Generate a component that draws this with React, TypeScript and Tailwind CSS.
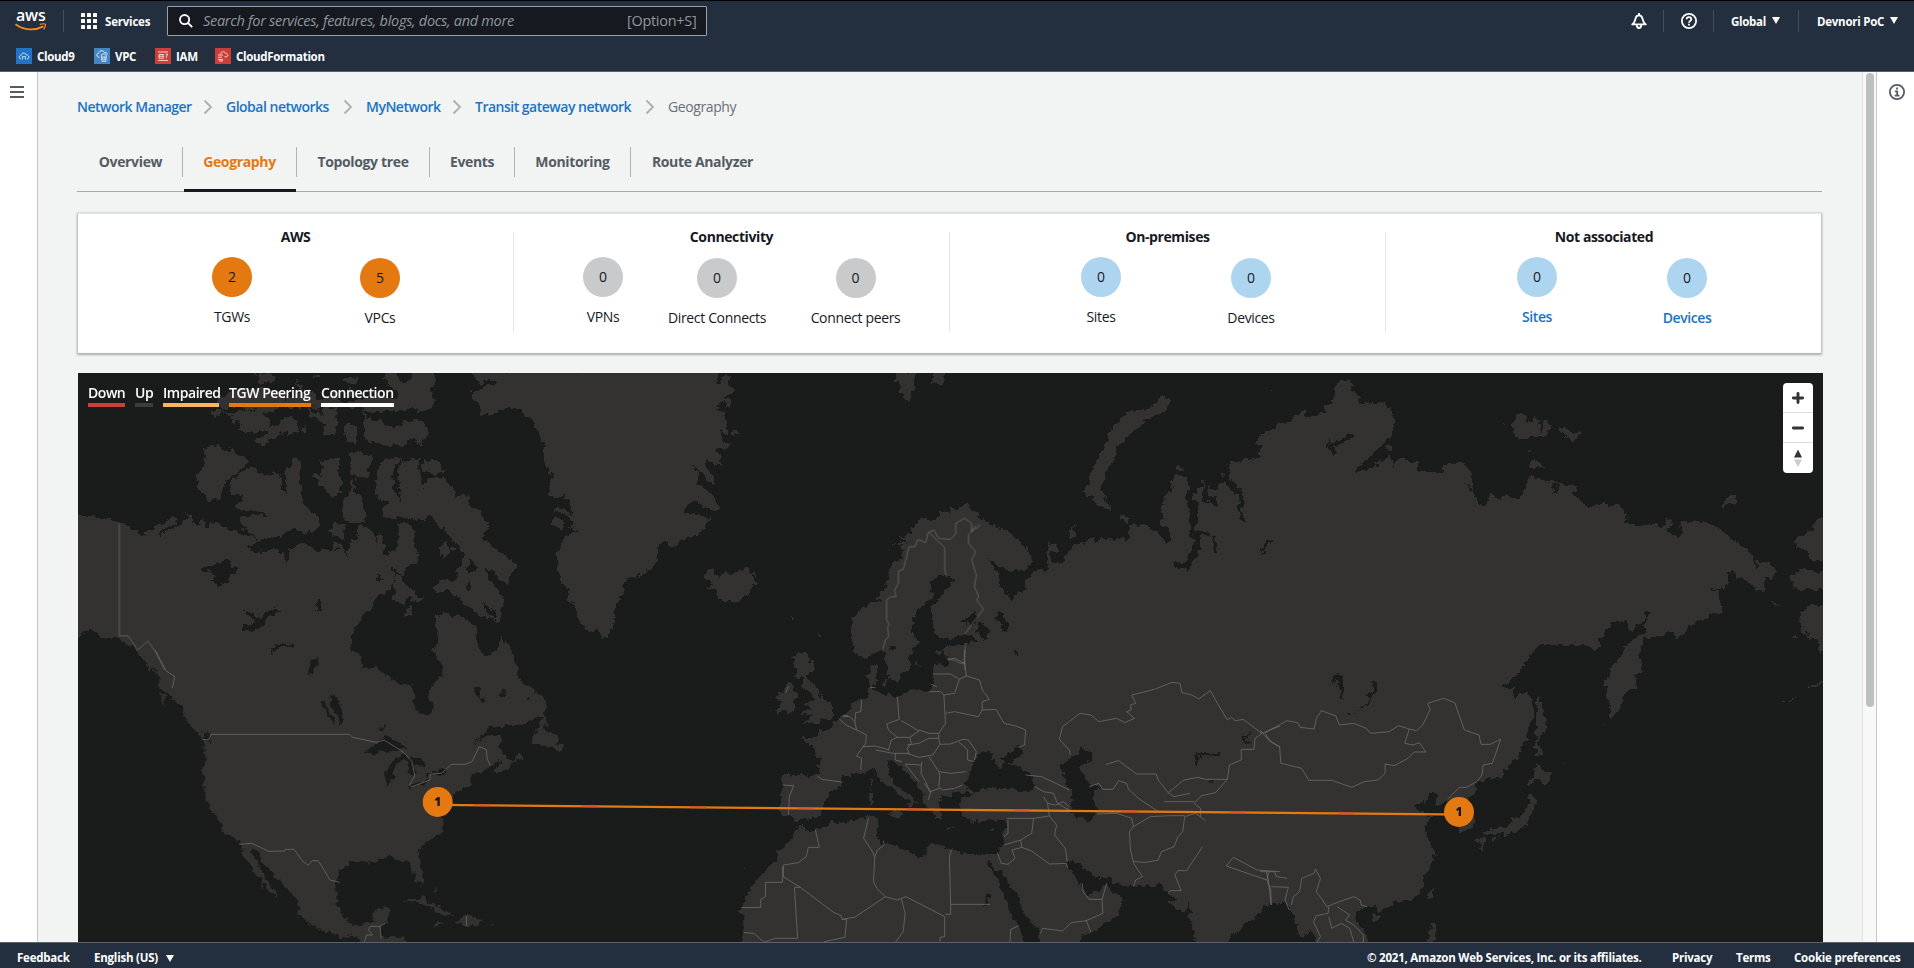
import React from "react";

type Tile = { x: number; y: number; w: number; h: number; land: string[]; water: string[]; borders: string };

const tiles: Tile[] = [
  {
    x: 60, y: 370, w: 620, h: 300,
    land: [
      "36,426 60,438 100,445 125,445 150,462 165,465 180,478 205,497 222,500 214,490 235,475 262,458 288,445 300,448 275,468 252,490 254,498 290,470 325,445 318,428 330,440 350,472 356,450 366,445 364,475 375,472 378,460 400,460 430,478 460,494 490,500 500,515 478,528 480,540 510,545 545,536 565,548 572,580 576,545 600,525 625,530 650,543 690,538 700,545 718,535 725,560 730,525 750,505 756,470 775,470 790,485 795,520 808,485 818,520 822,548 835,562 842,540 852,520 858,490 855,462 880,462 898,480 895,515 907,550 900,575 885,590 868,600 875,625 862,612 845,592 840,602 850,615 835,655 820,678 800,680 788,715 765,735 752,765 740,790 736,845 752,850 765,892 800,890 808,902 222,902 215,875 195,842 165,815 130,805 105,800 75,780 60,785 58,808 36,808",
      "855,612 870,635 885,655 900,665 898,680 917,685 912,693 895,692 880,682 865,705 855,692 838,690 848,672 845,640",
      "950,735 970,730 1000,738 1015,735 1030,755 1052,770 1056,820 1065,845 1080,857 1095,850 1110,820 1118,795 1130,820 1148,860 1158,902 966,902 960,870 943,845 955,810 950,770",
      "800,330 802,300 820,270 850,264 880,272 910,268 915,290 920,268 955,275 968,300 970,312 935,318 925,325 950,322 970,325 990,350 1000,375 1030,378 1035,410 1055,420 1070,425 1068,450 1085,462 1078,475 1070,500 1085,525 1110,545 1140,570 1160,585 1150,600 1135,620 1132,645 1110,625 1095,600 1075,595 1085,625 1110,665 1118,690 1115,730 1115,760 1095,745 1060,735 1020,705 1005,675 985,665 955,668 947,655 955,635 985,632 1005,628 997,605 1015,585 1022,560 1010,530 990,510 975,485 955,465 935,430 925,445 900,450 880,445 850,445 818,435 808,415 830,405 825,395 800,385",
      "428,350 440,325 465,300 488,290 500,305 530,315 545,305 555,320 563,360 575,370 572,330 568,290 585,292 588,270 610,270 612,285 605,310 612,350 614,400 630,420 655,440 655,465 640,485 625,480 620,495 600,485 590,475 565,495 530,510 500,512 485,485 460,475 452,455 465,440 525,432 495,418 450,418 440,405 472,378 430,375",
      "362,235 400,225 412,238 450,245 475,275 455,300 430,325 412,350 410,385 395,382 378,397 365,368 347,355 350,320 360,300 368,265",
      "655,268 690,262 705,270 700,300 713,340 712,370 690,388 675,365 655,345 638,310 665,318 660,300 672,290 655,285",
      "732,255 755,245 770,255 795,260 785,290 772,318 748,318 732,310 735,280",
      "750,320 742,365 760,380 765,410 775,440 765,465 745,462 718,455 716,430 718,380 735,365 740,330",
      "680,485 690,475 692,455 718,470 722,495 715,510 700,500",
      "690,515 717,525 712,545 690,540",
      "400,115 430,140 450,125 480,120 505,125 530,150 528,168 555,168 558,140 580,140 600,150 600,185 585,195 560,190 540,205 510,228 492,215 530,190 505,175 490,190 450,188 455,165 470,170 435,150 430,155 435,130 412,125 385,142 385,125",
      "630,110 648,135 650,112 662,138 665,110 700,115 700,165 695,195 668,195 668,175 678,165 650,150 632,140",
      "720,175 735,162 750,170 752,215 735,215 718,195",
      "610,175 620,172 620,190 610,190",
      "765,115 770,120 775,145 800,150 830,165 845,172 870,152 910,150 928,180 925,215 905,222 885,208 875,222 820,222 790,220 768,210 772,180",
      "820,20 830,2 850,2 860,35 872,40 885,22 888,2 945,2 950,40 935,60 948,90 940,110 915,125 900,115 870,125 820,122 790,125 760,110 720,110 725,95 800,80 850,85 855,70 830,40",
      "482,2 500,2 498,20 486,18",
      "508,10 540,14 540,40 510,45",
      "722,22 755,22 755,38 722,38",
      "596,25 602,25 615,70 612,85",
      "640,12 655,12 655,22 640,20",
      "400,85 440,60 500,50 560,58 570,90 600,70 640,60 650,95 700,60 714,105 690,112 640,110 560,112 520,128 450,110 400,115",
      "725,45 745,65 750,80 730,78",
      "962,525 975,518 988,532 984,550 965,560",
      "990,528 1003,532 998,542 988,538",
      "875,720 892,714 895,722 885,738 875,732",
      "1245,440 1262,445 1277,455 1272,475 1245,465",
      "1034,2 1050,22 1070,45 1072,32 1100,25 1098,45 1070,50 1055,60 1040,65 1045,90 1065,115 1070,132 1090,135 1110,125 1135,115 1170,125 1195,150 1205,185 1222,215 1228,260 1235,310 1250,310 1240,340 1235,372 1255,380 1275,368 1265,385 1285,390 1297,440 1270,415 1255,412 1250,420 1280,435 1298,455 1290,480 1308,483 1280,500 1270,515 1258,550 1257,590 1270,630 1280,660 1297,655 1286,672 1290,690 1310,740 1330,780 1360,785 1385,810 1390,780 1400,765 1402,730 1418,690 1425,640 1435,625 1455,622 1465,598 1468,622 1505,580 1512,545 1525,508 1540,525 1568,520 1568,2",
    ],
    water: [
      "850,285 865,270 853,320 860,350 858,372 865,395 850,375 840,320",
      "910,270 918,300 945,315 930,325 918,355 913,330",
      "352,602 385,590 420,570 432,580 430,592 450,590 447,610 430,620 425,635 402,652 398,640 375,640 395,615 370,605",
      "465,718 500,740 520,732 540,715 558,722 535,732 515,765 488,782 460,780 465,765 490,755",
      "645,700 662,693 660,715 650,725",
      "530,850 540,830 565,820 597,828 570,832 545,838",
      "636,902 638,870 650,870 648,902",
      "1035,570 1060,590 1042,612 1032,605",
      "1065,688 1100,728 1102,748 1075,722",
      "1028,630 1045,655 1030,655",
      "560,515 598,497 600,510 575,525",
      "695,532 706,534 704,545 695,543",
      "797,612 822,632 808,635",
    ],
    borders: "M150,462V798H173L196,840L222,813L243,848L265,900",
  },
  {
    x: 60, y: 650, w: 620, h: 318,
    land: [
      "193,-2 205,20 215,35 228,68 230,38 250,45 252,60 238,68 255,80 248,100 258,110 270,135 290,150 305,165 315,200 325,218 340,240 360,265 370,300 362,360 365,440 375,465 395,500 412,545 435,560 455,580 465,615 480,640 490,650 487,670 508,680 518,710 535,735 549,745 540,715 520,690 505,650 485,620 482,602 500,602 515,640 540,670 560,705 600,745 605,775 603,795 630,820 670,845 712,860 740,855 770,892 885,892 865,862 812,862 815,830 823,820 835,772 815,770 795,780 790,815 740,825 718,800 700,765 697,700 705,665 718,650 735,635 775,632 800,640 805,625 850,620 862,632 880,625 890,650 895,680 915,707 920,695 918,665 905,625 908,600 935,570 965,545 970,515 960,490 985,450 1000,425 1040,410 1038,380 1062,362 1088,350 1108,337 1125,330 1150,335 1160,308 1172,320 1140,345 1110,372 1100,355 1115,338 1130,320 1112,290 1118,255 1085,255 1060,270 1045,298 1055,268 1090,228 1170,226 1190,210 1225,195 1228,150 1195,120 1180,108 1160,80 1150,35 1140,-2 1100,-2 1080,17 1055,-2 943,-2 965,30 967,75 945,105 932,120 938,160 942,180 925,203 905,180 893,155 893,105 860,100 825,75 800,55 765,52 757,10 740,5 735,-2",
      "255,135 266,138 264,155 272,174 256,155",
      "1225,192 1228,225 1222,240 1250,245 1262,265 1258,285 1270,290 1262,305 1240,290 1190,283 1195,262 1210,225",
      "868,760 885,748 915,745 940,758 965,775 995,792 960,795 945,775 915,758 880,755",
      "998,822 1020,798 1045,800 1068,818 1035,828",
      "950,822 968,822 966,828 950,827",
      "1088,822 1102,822 1102,825 1088,825",
      "945,715 952,722 948,726",
    ],
    water: [
      "350,230 378,255 382,272 362,270 372,258",
      "768,305 795,285 815,270 820,255 845,265 865,285 878,296 845,300 830,312 810,303 795,308",
      "825,350 848,322 875,318 885,330 855,335 843,365 842,400 830,412 822,395",
      "875,322 915,325 925,348 910,350 900,345 895,378 885,368 882,340",
      "882,415 885,400 900,400 935,385 930,398 895,415",
      "925,378 940,365 975,358 970,370 945,374",
      "683,138 705,145 712,185 717,220 708,222 695,185 682,165",
      "657,155 672,160 680,190 695,215 692,228 675,195",
      "628,72 640,25 650,30 643,60",
      "808,232 820,226 822,243 810,245",
      "1045,125 1060,110 1070,122 1062,138 1076,152 1068,158 1058,138",
      "1108,138 1118,115 1133,135",
      "1178,145 1190,137 1184,150",
      "530,-2 540,-2 536,12",
      "1122,236 1152,246 1145,250",
      "900,157 912,160 904,164",
    ],
    borders: "M382,253H732L740,262L800,277L820,270L870,308L890,335L897,378L884,405L890,410L935,390L937,372L965,370L990,343H1025L1042,335L1060,290L1078,298L1080,325L1088,346M453,583L485,580L528,604L568,603L570,598H592L612,632L628,646L638,632H653L683,690L707,697M770,876L775,855H790L780,840L785,829H809L822,820M809,829L812,865M1028,798V828M240,0L268,62L290,80L284,115M382,253L376,270L360,268",
  },
  {
    x: 660, y: 370, w: 620, h: 300,
    land: [
      "-2,2 145,2 145,38 158,40 153,20 165,12 180,18 172,40 187,55 187,75 160,82 180,90 178,120 160,90 140,108 150,120 165,130 172,195 150,170 160,210 178,225 170,235 155,235 140,248 158,260 155,285 140,285 110,265 115,290 135,320 138,345 115,330 100,300 75,285 95,310 100,345 130,370 143,400 143,425 100,405 75,400 60,430 100,435 130,447 110,475 85,500 50,515 20,527 10,510 -2,542",
      "183,180 198,190 188,194",
      "595,2 650,2 640,60 630,98 615,80 602,65 610,50 598,40",
      "695,2 725,2 710,52 705,35 685,42",
      "113,625 120,602 135,595 148,625 165,610 180,615 213,595 235,610 245,640 225,670 185,697 145,685 138,660 117,652 135,645",
      "1275,75 1290,85 1288,105 1265,130 1215,160 1180,205 1160,230 1145,270 1125,310 1118,355 1130,395 1145,418 1120,415 1095,395 1090,380 1073,375 1075,350 1088,345 1090,305 1110,260 1130,215 1135,185 1165,150 1180,130 1195,122 1230,118 1255,100",
      "485,745 515,715 530,695 555,695 550,685 575,640 580,600 592,570 615,570 610,555 620,540 605,530 625,520 585,528 620,512 605,495 640,495 640,475 660,445 700,450 710,425 735,430 738,400 748,420 768,400 785,415 810,430 800,440 830,455 875,485 910,520 938,545 940,575 925,600 895,603 860,590 832,570 845,592 858,610 855,640 870,665 890,688 905,670 928,660 922,640 932,625 955,595 978,603 980,550 978,515 1000,515 1010,540 990,550 985,570 1005,578 1022,575 1025,550 1060,520 1085,515 1095,500 1100,523 1115,505 1145,515 1155,498 1175,518 1190,490 1185,460 1240,470 1288,525 1290,490 1270,460 1268,395 1290,370 1298,315 1338,320 1338,360 1330,385 1340,420 1340,485 1350,510 1345,545 1330,575 1300,580 1300,595 1335,598 1365,545 1365,495 1395,495 1400,545 1412,548 1402,500 1382,482 1355,485 1358,450 1358,395 1345,390 1355,360 1370,350 1368,320 1376,350 1372,380 1385,395 1410,405 1405,385 1385,375 1390,350 1430,340 1450,370 1468,375 1462,415 1465,440 1482,460 1472,425 1478,375 1460,345 1443,335 1440,278 1470,275 1515,262 1520,230 1505,220 1520,195 1540,185 1568,162 1568,902 775,902 775,820 802,812 790,795 770,793 715,810 692,785 688,710 720,665 740,640 735,620 700,618 688,640 690,680 650,720 640,750 636,790 660,812 650,828 635,845 628,875 628,902 578,902 565,845 540,850 515,863 495,850 487,820 485,780",
      "718,835 745,825 770,822 776,835 776,902 730,902 735,885 730,868 740,862 718,850",
      "690,902 695,882 710,880 722,902",
      "698,850 712,850 706,858",
      "1035,478 1046,470 1052,490 1038,502",
      "1162,432 1172,435 1185,458 1166,450",
      "1310,283 1324,295 1308,302",
      "330,862 340,860 352,850 378,850 375,875 393,880 390,902 345,902 350,885",
      "527,902 545,880 550,902",
      "328,738 335,740 333,747",
      "400,792 406,790 404,802",
      "650,880 658,870 654,892",
      "1418,305 1424,312 1416,318",
    ],
    water: [
      "803,758 835,780 830,805 815,812 805,785",
      "858,718 872,735 880,780 870,780 852,745",
      "895,835 912,850 908,865 893,852",
      "765,748 785,740 795,727 800,738 790,765 778,755 770,770",
      "575,855 580,830 600,825 595,848",
      "1525,525 1548,510 1530,552 1522,548",
      "885,645 895,642 900,658 890,662",
      "1395,345 1410,330 1408,360 1396,358",
    ],
    borders: "M563,838L570,810L578,800L575,770L580,765L573,750V690L582,680H597L593,660L603,640V603L615,598L630,530L645,530L652,508L672,518L678,487L692,480L705,505L735,508L748,490V460L770,445L788,460V485L810,465M680,487L720,533V600L725,622M800,465L780,495V520L798,545L788,570L800,615L795,650L806,680L800,690L818,717L770,793M772,820L770,875L772,900M728,868L745,870L760,880H772",
  },
  {
    x: 660, y: 650, w: 620, h: 318,
    land: [
      "345,15 358,10 378,10 370,40 392,42 388,65 370,85 385,90 400,120 418,155 438,165 435,190 430,210 400,212 395,220 370,222 355,228 375,205 390,198 358,190 375,175 370,160 392,150 385,125 370,115 360,110 362,85 342,80 345,60 340,45",
      "295,130 312,128 318,105 335,105 345,125 340,145 340,180 300,193 290,185 303,170 298,150",
      "680,125 687,100 688,55 700,38 718,58 730,50 728,-2 1568,-2 1568,760 1548,765 1520,770 1518,785 1490,815 1450,850 1430,892 1360,892 1345,830 1340,755 1335,770 1315,785 1290,755 1308,748 1290,730 1275,720 1265,705 1200,710 1145,700 1140,680 1105,685 1085,670 1060,640 1045,625 1025,640 1045,670 1060,710 1068,698 1070,720 1085,730 1110,725 1130,700 1140,725 1175,755 1140,815 1080,850 1050,892 962,892 960,850 945,825 915,775 910,745 880,690 862,660 850,662 832,632 835,650 850,680 870,740 890,790 905,830 930,892 205,892 215,830 205,780 215,750 235,700 255,680 295,630 298,600 330,575 345,540 352,530 380,540 410,535 430,515 470,515 525,502 545,500 555,520 548,545 550,570 565,580 620,600 645,610 658,622 672,618 675,590 700,582 740,600 790,612 835,610 855,608 865,580 877,530 875,505 840,510 790,515 765,500 762,480 760,440 780,432 750,425 735,437 710,440 715,455 700,450 708,465 712,505 695,505 690,490 672,465 665,430 650,400 625,370 605,345 590,330 575,335 575,360 590,395 632,440 655,465 640,460 630,475 628,450 590,420 560,395 545,360 535,355 515,370 480,375 460,380 457,405 425,440 412,460 410,490 395,500 360,505 345,512 325,498 310,498 303,460 310,410 303,385 320,372 370,378 405,370 405,325 385,285 370,282 362,265 398,265 400,242 435,235 440,215 470,195 485,165 500,150 528,140 530,110 523,80 540,50 550,45 548,80 540,115 550,125 570,135 600,138 650,118",
      "578,488 612,485 608,503 580,492",
      "528,430 540,430 540,460 528,465",
      "532,390 538,392 535,418",
      "718,530 745,534 744,538 720,536",
      "830,545 850,535 840,547",
      "568,-2 630,-2 628,60 612,75 600,97 582,85 578,50",
      "490,5 500,-2 540,-2 530,15 515,24",
      "560,100 565,90 577,85 577,108 565,112",
      "690,-2 722,-2 715,5 705,8",
      "652,38 658,30 654,50",
      "208,656 214,658 211,662",
      "332,22 338,20 334,30",
    ],
    water: [
      "770,405 785,365 790,345 805,315 820,305 838,310 835,320 850,325 848,345 860,355 875,340 905,350 945,385 948,412 925,427 890,420 850,408 810,425 775,418",
      "858,320 890,310 900,292 916,290 912,310 895,335 885,338 870,332",
      "1040,320 1065,298 1090,300 1095,325 1080,340 1065,350 1072,385 1090,400 1085,415 1105,435 1095,450 1103,465 1103,495 1080,512 1050,505 1038,480 1045,420 1035,415 1025,395 1020,360 1010,345 1030,335",
      "1085,405 1112,415 1105,430 1090,425",
      "1350,330 1362,310 1422,307 1415,314 1365,315 1357,345 1350,335",
      "1475,262 1490,248 1495,252 1480,262 1492,278 1475,278",
      "1380,395 1412,390 1395,402",
      "752,430 785,426 778,435",
      "895,2 912,10 908,26 895,12",
      "815,768 835,732 838,745 822,766",
    ],
    borders: "M393,540L403,592H375L370,620L350,638L312,645V680L355,712L440,788L458,797L460,808L492,802L570,740L548,715L540,695L543,620L535,600L515,565L527,505M310,650V697H267V740L255,748V772L205,773M355,712H340L348,865H290L275,872L262,876L238,850L212,848M460,808H472L468,862L415,875M570,740L600,750L622,740L720,800V860L708,862V876M610,745L620,790L615,845L596,876M737,600L732,620L735,763H835M735,763V793H722M543,620L550,600L567,585L565,572M885,876L887,838L908,827M863,640L853,608M863,640L880,643L898,625L890,600L915,592L940,603L985,642L1028,640L1030,652M877,505H945L940,550L912,570L870,585M912,570L915,592M880,510V550L870,560M945,505L985,498L1003,525L998,555L1025,595L1030,635M1068,700L1070,725L1085,748H1118L1130,700M1118,748L1120,790L1078,812L1040,818L1018,843L968,835L962,850M1078,812L1090,847M985,498L980,460L970,440M925,375L965,380L1010,405L1035,420M948,410L970,425L995,430L1005,460L1035,480M980,460L1000,465L1020,455L1035,470M1197,710L1203,690L1220,680L1198,640L1190,600L1187,545L1197,530L1193,505L1155,490L1105,492M1198,635L1230,637L1260,630L1268,605L1300,590L1310,560L1322,545L1327,500L1355,490L1380,512M1197,530L1240,500L1290,497H1327M1285,732L1290,722H1318L1302,675L1310,662H1332L1372,590M1085,410L1110,400L1120,418H1145L1160,392L1180,400L1185,418L1210,445L1260,485M1128,343L1160,332L1205,372H1255L1260,390L1285,428L1325,390L1360,382L1380,388H1435L1440,345L1470,330V298H1502L1505,265L1522,250L1475,208L1455,212L1445,202L1435,210L1405,150L1392,122L1362,147L1345,135L1320,128L1315,100L1295,97L1250,118L1193,135L1203,160L1190,165L1192,180L1180,185L1200,205L1175,218L1155,205L1110,215L1090,195L1062,190L1035,215L1018,230L1010,268L1035,300L1038,315M1435,388L1405,428L1370,437L1350,460L1367,475V500M1285,428L1300,440L1340,430M1275,455H1350M1522,250L1568,228M1530,250L1545,275L1568,292M1432,648L1450,622L1510,660L1568,665M1432,648L1535,690L1540,665M1535,690L1545,720V765M510,150L508,185L495,188L493,215L497,240L470,225L452,205M493,215L480,200L462,198L475,197M497,240L522,255L520,280L497,318L510,325L508,360M512,290L545,288L580,300M600,140L605,208L573,222L578,240L600,262L632,262L655,243L630,225L610,212M655,240L680,250L705,250L722,220L718,135L710,125H680M578,300L585,270L600,262M632,262L635,280L625,295L630,310L590,310L545,300M625,285L655,280L680,265H705V250M705,265L708,283L690,315L655,322L625,310M708,283L735,282L765,268L780,270L800,305L795,330M755,275L778,300V330L795,335M680,320L705,365L735,370L775,365M705,365L708,375L705,410L715,420L745,415L765,405M708,415L682,425L672,395L660,370L662,335M595,310V330L612,335M620,342L660,345M620,342L655,395M668,400L685,425L678,450M722,190L745,185L805,200L815,180L850,178L870,220L900,228L925,240L922,285L905,292M690,72H735L757,88L745,130L718,135M757,88L775,78L808,90L815,120L833,148L815,155V180M685,103L700,110M775,78L770,40L745,25L728,28M770,40V0M398,378L410,388L458,396M310,405L338,407L327,440L325,495M318,128L325,108M545,113L532,112",
  },
  {
    x: 1260, y: 370, w: 654, h: 300,
    land: [
      "-2,212 15,195 40,170 75,150 85,135 110,125 108,140 125,138 155,125 155,110 175,105 172,80 190,40 210,28 230,40 222,48 220,65 245,75 238,98 248,105 255,95 290,92 310,110 322,150 320,185 295,220 260,265 235,290 222,318 235,305 265,292 290,275 285,265 300,268 310,260 318,270 322,292 330,275 355,270 380,282 380,300 405,310 440,308 443,275 465,280 490,280 508,310 510,350 518,395 532,412 545,395 550,368 570,387 590,375 615,388 625,380 632,380 635,350 640,330 665,325 700,335 720,345 750,345 758,362 745,372 775,390 788,412 820,403 860,405 878,430 878,460 900,467 930,463 965,468 970,455 988,450 978,480 1000,500 1010,490 1005,450 1040,457 1075,457 1110,480 1130,505 1165,535 1182,562 1185,595 1195,592 1195,570 1220,580 1238,605 1228,625 1212,628 1205,667 1185,655 1165,625 1142,622 1135,600 1122,608 1122,640 1105,658 1088,658 1085,648 1076,652 1095,665 1100,690 1110,710 1110,730 1085,730 1040,760 1003,805 990,790 960,800 925,805 905,860 915,875 910,902 835,902 860,870 890,810 920,785 930,735 938,730 925,725 918,760 885,787 880,750 850,755 825,790 810,830 800,838 780,825 750,818 740,827 680,825 660,835 645,860 622,902 -2,902",
      "605,160 625,127 648,165 655,135 690,155 698,180 680,200 650,200 628,215 608,190",
      "717,165 735,178 765,190 760,208 745,210 720,185",
      "645,270 660,262 680,292 650,290",
      "645,240 649,240 648,255",
      "587,155 590,155 590,175",
      "302,228 318,228 315,248 302,240",
      "1107,395 1130,378 1147,392 1120,408 1106,408",
      "650,315 665,323 640,330",
      "1362,435 1335,440 1322,485 1285,500 1283,518 1310,545 1322,570 1340,580 1362,578",
      "1362,605 1330,605 1310,590 1290,605 1268,622 1285,658 1320,662 1362,655",
      "1362,700 1310,712 1292,745 1300,790 1320,810 1338,815 1340,848 1362,845",
      "1218,693 1236,696 1252,709 1240,706",
      "1275,802 1290,802 1288,809 1275,808",
      "30,55 34,55 34,59 30,59",
    ],
    water: [
      "162,205 172,220 195,210 212,190 228,205 205,215 180,235 178,260 165,235",
      "490,335 510,355 505,368",
      "5,552 5,530 30,508 18,535",
      "692,340 718,345 712,370 700,368 708,352",
      "668,165 680,150 676,190 668,180",
      "1306,782 1318,786 1315,795",
      "925,838 934,838 928,848",
    ],
    borders: "",
  },
  {
    x: 1260, y: 650, w: 654, h: 318,
    land: [
      "-2,-2 662,-2 640,30 615,75 583,110 600,125 610,108 605,140 612,145 620,130 640,128 655,160 653,205 640,240 642,270 610,330 575,385 560,388 545,382 530,395 515,402 515,430 495,445 510,480 511,537 478,547 475,500 460,480 450,450 420,468 425,435 410,430 400,455 372,465 375,480 395,485 395,500 412,498 388,540 405,565 415,600 420,630 405,660 395,690 392,712 365,745 320,760 283,788 275,770 255,772 235,780 228,800 232,820 250,840 265,892 135,892 130,845 122,840 105,860 92,855 92,820 80,795 60,758 40,765 -2,768",
      "662,155 672,130 678,180 687,245 672,250 668,290 680,310 662,315",
      "662,340 680,362 702,375 682,402 658,390 645,412 640,400 648,388 658,380",
      "645,430 655,428 662,450 655,480 645,490 642,530 610,540 590,560 582,545 540,555 535,550 560,532 595,530 608,505 630,495 643,465",
      "518,570 535,562 540,575 532,605 525,604 528,588",
      "553,562 575,556 556,576",
      "402,735 418,712 415,745 405,755",
      "265,800 288,795 280,818 268,820",
      "410,822 425,822 422,850 412,892 400,892 406,850",
      "870,30 882,-2 905,-2 910,35 916,45 915,70 900,75 903,110 880,125 868,155 855,190 840,203 838,160 828,110 832,75 845,45",
      "823,226 832,217 830,222",
      "1302,120 1325,108 1340,88 1352,88 1340,98 1325,114",
      "1255,158 1264,150 1258,158",
      "1266,152 1285,140 1272,155",
      "731,339 734,339 734,342 731,342",
    ],
    water: [
      "202,188 225,192 250,165 268,120 272,88 281,90 275,135 245,175 215,198",
      "166,100 176,90 174,78 188,70 198,82 203,155 192,138 193,90 182,85 186,105 175,100",
      "610,103 616,108 610,112",
    ],
    borders: "M12,248L65,212L90,218L97,232L130,237L135,205L147,182L182,198L190,225L225,220L255,235L265,250L310,245L332,227L358,237L347,280L367,285L382,278L398,306H370L355,325L322,347L300,342V370L283,390L250,395L220,412L172,391H117L100,355L50,340L47,290L22,272L0,240M358,237L375,242L390,225L408,180L402,160L440,145L467,158L490,240L525,255L530,283H552L577,268L557,340L535,345L532,375L520,395L495,412H478L450,447M0,665H35L40,680L65,685M15,665L20,690L27,765M27,710L68,712L60,750L70,780M75,765L80,740L95,725L100,685L130,670L133,657L145,685L135,725L150,750L160,770L190,755L225,740L240,750L243,765L257,770M137,876L145,860L128,815L135,797L163,790L165,770M165,800L172,835L195,820L215,835L225,876M185,770L215,795L205,810L225,825L248,855V876",
  },
];

function WorldMap() {
  return (
    <svg className="block h-[569px] w-[1745px]" viewBox="78 373 1745 569">
      <defs>
        <filter id="coast" filterUnits="userSpaceOnUse" x="60" y="360" width="1780" height="600" colorInterpolationFilters="sRGB">
          <feTurbulence type="fractalNoise" baseFrequency="0.14" numOctaves="3" seed="4" result="n" />
          <feDisplacementMap in="SourceGraphic" in2="n" scale="9" xChannelSelector="R" yChannelSelector="G" />
        </filter>
      </defs>
      <rect x="78" y="373" width="1745" height="569" fill="#1a1c1b" />
      <g filter="url(#coast)">
        {tiles.map((t, i) => (
          <svg key={i} x={t.x} y={t.y} width={t.w} height={t.h} viewBox={`0 0 1568 ${t.h * 3}`} preserveAspectRatio="none">
            {t.land.map((p, k) => (
              <polygon key={k} points={p} fill="#343231" shapeRendering="crispEdges" />
            ))}
            {t.water.map((p, k) => (
              <polygon key={k} points={p} fill="#1a1c1b" shapeRendering="crispEdges" />
            ))}
          </svg>
        ))}
      </g>
      {tiles.map((t, i) => (
        <svg key={i} x={t.x} y={t.y} width={t.w} height={t.h} viewBox={`0 0 1568 ${t.h * 3}`} preserveAspectRatio="none">
          <path d={t.borders} fill="none" stroke="#72767a" strokeWidth="0.8" strokeOpacity="0.85" vectorEffect="non-scaling-stroke" />
        </svg>
      ))}
      <line x1="438" y1="804.9" x2="1459" y2="814.5" stroke="#e47911" strokeWidth="2.2" />
      <line x1="438" y1="804.9" x2="1459" y2="814.5" stroke="#dc4a38" strokeWidth="2" strokeDasharray="16 92" strokeDashoffset="-36" strokeOpacity="0.75" />
      <g fill="#e47911">
        <circle cx="437.7" cy="802" r="15" />
        <circle cx="1459" cy="812" r="15" />
      </g>
      <g fill="#16191f" fontFamily="Open Sans, sans-serif" fontSize="12" fontWeight="800" textAnchor="middle">
        <text x="437.7" y="806.3">1</text>
        <text x="1459" y="816.3">1</text>
      </g>
    </svg>
  );
}

function Chevron() {
  return (
    <svg className="mx-[13px] h-4 w-[10px] shrink-0" viewBox="0 0 10 16" fill="none" stroke="#aab0b2" strokeWidth="1.8">
      <path d="M1.5 1.5L8 8L1.5 14.5" />
    </svg>
  );
}

function Caret() {
  return (
    <svg className="h-[7px] w-2 shrink-0" viewBox="0 0 8 7">
      <path d="M0 0H8L4 7Z" fill="#fff" />
    </svg>
  );
}

function Stat({ n, label, w, color, low, link }: { n: number; label: string; w: string; color: string; low?: boolean; link?: boolean }) {
  return (
    <div className={`flex shrink-0 flex-col items-center ${w} ${low ? "pt-px" : ""}`}>
      <div className={`flex size-10 items-center justify-center rounded-full pb-px font-medium ${color}`}>{n}</div>
      <div className={`mt-[10px] whitespace-nowrap leading-5 ${link ? "font-semibold tracking-[-0.4px] text-[#1a73c4]" : "font-medium tracking-[-0.35px]"}`}>{label}</div>
    </div>
  );
}

function Column({ title, pad, last, children }: { title: string; pad: string; last?: boolean; children: React.ReactNode }) {
  return (
    <div className={`h-[100px] w-[436px] shrink-0 ${last ? "" : "border-r border-[#e4e7e7]"}`}>
      <div className="-mt-[5px] text-center font-bold leading-5 tracking-[-0.4px]">{title}</div>
      <div className={`mt-[10px] flex ${pad}`}>{children}</div>
    </div>
  );
}

function Tab({ label, w, active, last }: { label: string; w: string; active?: boolean; last?: boolean }) {
  return (
    <div className={`relative flex h-[44px] shrink-0 justify-center ${w}`}>
      <div className={`flex h-[30px] w-full items-center justify-center whitespace-nowrap pb-[2px] ${last ? "" : "border-r border-[#aab7b8]"} ${active ? "text-[#e47911]" : ""}`}>{label}</div>
      {active && <div className="absolute -bottom-px left-px right-[1px] h-[3px] bg-[#16191f]" />}
    </div>
  );
}

function Fav({ label, icon, w }: { label: string; icon: React.ReactNode; w: string }) {
  return (
    <div className={`flex shrink-0 items-center gap-[5px] whitespace-nowrap ${w}`}>
      {icon}
      <span className="pt-px">{label}</span>
    </div>
  );
}

const grid = [0, 6, 12];

export default function App() {
  return (
    <div className="flex h-[968px] w-[1914px] flex-col overflow-hidden bg-[#f2f3f3] font-['Open_Sans',sans-serif] text-[14px] text-[#16191f]">
      <header className="flex h-[72px] shrink-0 flex-col border-b border-t border-b-[#5b6268] border-t-black bg-[#232f3e] font-bold text-white">
        <div className="flex h-[40px] items-center">
          <div className="ml-[15px] mt-px h-[22px] w-[32px]">
            <div className="h-[13px] whitespace-nowrap pl-px text-[16px] font-semibold leading-[11px] tracking-[-0.2px]">aws</div>
            <svg className="h-[8px] w-[32px]" viewBox="0 0 32 8" fill="none" stroke="#f58b1f">
              <path d="M0.5 1.2C9 7.6 20 7.8 28.5 3.4" strokeWidth="1.8" />
              <path d="M24.8 1.4C27.5 0.6 29.5 0.7 30.3 1.2C30.8 2.3 29.9 4.6 28.6 6.4" strokeWidth="1.2" />
            </svg>
          </div>
          <div className="ml-4 h-[22px] w-px bg-[#45505c]" />
          <svg className="ml-[17px] h-4 w-4" viewBox="0 0 16 16" fill="#fff">
            {grid.map((gx) => grid.map((gy) => <rect key={`${gx}-${gy}`} x={gx} y={gy} width="4" height="4" rx="0.6" />))}
          </svg>
          <div className="ml-2 mt-[2px] w-[62px] text-[11.5px] tracking-[-0.2px]">Services</div>
          <div className="flex h-[30px] w-[540px] items-center rounded-[1px] border border-[#9aa1a6] bg-[#16191f] font-normal text-[#8d989e]">
            <svg className="ml-[11px] h-[14px] w-[14px]" viewBox="0 0 14 14" fill="none" stroke="#fff" strokeWidth="1.8">
              <circle cx="5.6" cy="5.6" r="4.6" />
              <path d="M9 9L13.2 13.2" />
            </svg>
            <div className="ml-[10px] w-[424px] whitespace-nowrap text-[14.5px] font-medium italic tracking-[-0.3px]">Search for services, features, blogs, docs, and more</div>
            <div className="whitespace-nowrap text-[14.5px] font-medium tracking-[-0.3px]">[Option+S]</div>
          </div>
          <svg className="ml-[924px] h-4 w-4" viewBox="0 0 16 16" fill="none" stroke="#fff" strokeWidth="1.8">
            <path d="M1.2 11.4C3.4 9.8 4 8.5 4.4 6C4.8 3.6 6.2 2.4 8 2.4S11.2 3.6 11.6 6C12 8.5 12.6 9.8 14.8 11.4Z" strokeLinejoin="round" />
            <path d="M8 2.2V0M5.8 12C5.8 16 10.2 16 10.2 12" />
          </svg>
          <div className="ml-4 h-[22px] w-px bg-[#45505c]" />
          <svg className="ml-[17px] h-4 w-4" viewBox="0 0 16 16" fill="none" stroke="#fff">
            <circle cx="8" cy="8" r="7.1" strokeWidth="1.8" />
            <path d="M5.6 6.2C5.7 3.4 10.3 3.5 10.3 6.2C10.3 7.8 8 7.9 8 9.8M8 10.8V12.6" strokeWidth="1.8" />
          </svg>
          <div className="ml-4 h-[22px] w-px bg-[#45505c]" />
          <div className="ml-[17px] mt-[2px] w-[41px] whitespace-nowrap text-[11.5px] tracking-[-0.3px]">Global</div>
          <Caret />
          <div className="ml-[18px] h-[22px] w-px bg-[#45505c]" />
          <div className="ml-[18px] mt-[2px] w-[73px] whitespace-nowrap text-[11.5px] tracking-[-0.25px]">Devnori PoC</div>
          <Caret />
        </div>
        <div className="flex h-[31px] items-center pl-4 text-[11.5px] tracking-[-0.3px]">
          <Fav w="w-[78px]" label="Cloud9" icon={
            <svg className="size-4" viewBox="0 0 16 16" fill="none" stroke="#dcebfa" strokeWidth="0.9"><rect width="16" height="16" fill="#2374c6" stroke="none" /><path d="M5 11C2.5 10.8 2.8 7.6 5 7.6C5.2 4.4 9.6 4.2 10.4 7C13.4 6.8 13.6 10.8 11 11M6.5 11.5V8.7H9.5V11.5" /></svg>
          } />
          <Fav w="w-[61px]" label="VPC" icon={
            <svg className="size-4" viewBox="0 0 16 16" fill="none" stroke="#e6f1fb" strokeWidth="0.9"><rect width="16" height="16" fill="#4585c4" stroke="none" /><path d="M5.5 9.5C2.2 9 2.2 5.6 4.4 5.4C4.6 2.4 9.2 1.8 10.6 4.4C12.4 4.2 13.2 5.2 13.2 6.4M7.4 6.8C7.8 5.6 12 5.6 12.2 6.8L11.8 13.2H8L7.4 6.8ZM9 8.2V12M10.8 8.2V12" /></svg>
          } />
          <Fav w="w-[60px]" label="IAM" icon={
            <svg className="size-4" viewBox="0 0 16 16" fill="none" stroke="#ffe1dc" strokeWidth="0.9"><rect width="16" height="16" fill="#c9403a" stroke="none" /><path d="M3 4H13M3 12.4H13M4 6.5H8.4V10.2H4ZM4 8.2H8.4M10.4 6.2H12.6M12.6 6.2L11 9.8" /></svg>
          } />
          <Fav w="w-[120px]" label="CloudFormation" icon={
            <svg className="size-4" viewBox="0 0 16 16" fill="none" stroke="#ffe1dc" strokeWidth="0.9"><rect width="16" height="16" fill="#c9403a" stroke="none" /><path d="M5.5 6C6 3 9.8 3 10.4 5.4C13.5 5.5 13.4 8.8 11 8.8H9.5M3 7H8M3 9.2H7M3 11.4H7.5V13H4" /></svg>
          } />
        </div>
      </header>

      <div className="flex h-[870px] shrink-0">
        <nav className="w-[38px] shrink-0 border-r border-[#c5c8c9] bg-white pl-[10px] pt-[14px]">
          <svg className="h-[12px] w-[14px]" viewBox="0 0 14 12" fill="#545b64">
            <rect width="14" height="2" /><rect y="5" width="14" height="2" /><rect y="10" width="14" height="2" />
          </svg>
        </nav>

        <main className="w-[1824px] shrink-0 pl-[39px]">
          <div className="flex h-[70px] items-center whitespace-nowrap pb-px text-[14px] font-semibold tracking-[-0.5px] text-[#1a73c4]">
            <span className="w-[113px]">Network Manager</span><Chevron />
            <span className="w-[104px]">Global networks</span><Chevron />
            <span className="w-[73px]">MyNetwork</span><Chevron />
            <span className="w-[157px]">Transit gateway network</span><Chevron />
            <span className="font-medium tracking-[-0.4px] text-[#687078]">Geography</span>
          </div>
          <div className="mt-[5px] flex h-[45px] w-[1745px] border-b border-[#a2a9ad] pl-[2px] text-[14px] font-bold tracking-[-0.35px] text-[#545b64]">
            <Tab label="Overview" w="w-[104px]" />
            <Tab label="Geography" w="w-[114px]" active />
            <Tab label="Topology tree" w="w-[133px]" />
            <Tab label="Events" w="w-[85px]" />
            <Tab label="Monitoring" w="w-[116px]" />
            <Tab label="Route Analyzer" w="w-[143px]" last />
          </div>

          <section className="ml-px mt-[21px] flex h-[140px] w-[1743px] border-t border-[#e4e7e7] bg-white pt-[18px] shadow-[0_1px_2px_1px_rgba(0,28,36,0.3)]">
            <Column title="AWS" pad="pl-[80px]">
              <Stat n={2} label="TGWs" w="w-[148px]" color="bg-[#e47911]" />
              <Stat n={5} label="VPCs" w="w-[148px]" color="bg-[#e47911]" low />
            </Column>
            <Column title="Connectivity" pad="pl-[32px]">
              <Stat n={0} label="VPNs" w="w-[114px]" color="bg-[#c8cacb]" />
              <Stat n={0} label="Direct Connects" w="w-[114px]" color="bg-[#c8cacb]" low />
              <Stat n={0} label="Connect peers" w="w-[163px]" color="bg-[#c8cacb]" low />
            </Column>
            <Column title="On-premises" pad="pl-[76px]">
              <Stat n={0} label="Sites" w="w-[150px]" color="bg-[#aed5f0]" />
              <Stat n={0} label="Devices" w="w-[150px]" color="bg-[#aed5f0]" low />
            </Column>
            <Column title="Not associated" pad="pl-[76px]" last>
              <Stat n={0} label="Sites" w="w-[150px]" color="bg-[#aed5f0]" link />
              <Stat n={0} label="Devices" w="w-[150px]" color="bg-[#aed5f0]" low link />
            </Column>
          </section>

          <section className="relative ml-px mt-[20px] h-[569px] w-[1745px] overflow-hidden">
            <WorldMap />
            <div className="absolute left-[10px] top-[9px] flex gap-[10px] whitespace-nowrap text-[14px] font-semibold leading-[21px] tracking-[-0.45px] text-white">
              <div className="w-[37px] border-b-4 border-[#c9403a]">Down</div>
              <div className="w-[18px] border-b-4 border-[#3b3d3c]">Up</div>
              <div className="w-[56px] border-b-4 border-[#f8b55a]">Impaired</div>
              <div className="w-[82px] border-b-4 border-[#e47911]">TGW Peering</div>
              <div className="w-[73px] border-b-4 border-white">Connection</div>
            </div>
            <div className="absolute left-[1705px] top-[10px] flex h-[90px] w-[30px] flex-col divide-y divide-[#ddd] overflow-hidden rounded-[4px] bg-white">
              <svg className="h-[30px] w-[30px]" viewBox="0 0 30 30" stroke="#333" strokeWidth="3" strokeLinecap="round"><path d="M10.2 15.5H19.8M15 10.7V20.3" /></svg>
              <svg className="h-[30px] w-[30px]" viewBox="0 0 30 30" stroke="#333" strokeWidth="3" strokeLinecap="round"><path d="M10.2 15.5H19.8" /></svg>
              <svg className="h-[30px] w-[30px]" viewBox="0 0 30 30"><path d="M11 14.5L15 6.5L19 14.5Z" fill="#333" /><path d="M11 16.5L15 24L19 16.5Z" fill="#ccc" /></svg>
            </div>
          </section>
        </main>

        <div className="w-[15px] shrink-0 border-l border-r border-l-[#e2e4e4] border-r-[#c5c8c9] bg-[#f8f8f8] pl-[3px] pt-px">
          <div className="h-[634px] w-2 rounded-full bg-[#bdc0c2]" />
        </div>
        <aside className="w-[37px] shrink-0 bg-white pl-3 pt-3">
          <svg className="size-4" viewBox="0 0 16 16" fill="none" stroke="#545b64">
            <circle cx="8" cy="8" r="7.1" strokeWidth="1.8" />
            <path d="M8 3.6V5.6M6 7.4H8.2V11.4M5.6 11.7H10.4" strokeWidth="1.8" />
          </svg>
        </aside>
      </div>

      <footer className="flex h-[26px] shrink-0 items-center whitespace-nowrap border-t border-[#5b6268] bg-[#232f3e] pl-[17px] pt-[5px] text-[11.5px] font-bold leading-5 tracking-[-0.22px] text-white">
        <span className="w-[77px]">Feedback</span>
        <span className="w-[72px]">English (US)</span>
        <Caret />
        <span className="ml-[1193px] w-[305px]">© 2021, Amazon Web Services, Inc. or its affiliates.</span>
        <span className="w-[64px]">Privacy</span>
        <span className="w-[58px]">Terms</span>
        <span>Cookie preferences</span>
      </footer>
    </div>
  );
}
